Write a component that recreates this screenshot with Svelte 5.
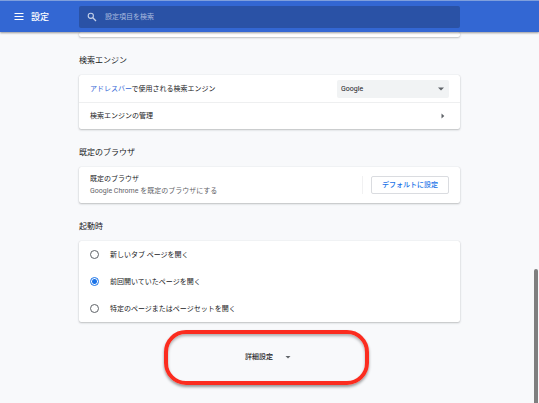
<script lang="ts">
	const startupOptions = [
		{ value: 'newtab', label: '新しいタブ ページを開く' },
		{ value: 'continue', label: '前回開いていたページを開く' },
		{ value: 'specific', label: '特定のページまたはページセットを開く' }
	];

	let startup = $state('continue');
	let engine = $state('Google');
	let query = $state('');
</script>

<header>
	<div class="brand">
		<button type="button" class="menu" aria-label="メニュー">
			<svg width="10" height="7" viewBox="0 0 10 7">
				<path d="M0.5 0.5h9M0.5 3.5h9M0.5 6.5h9" stroke="currentColor" stroke-width="1" />
			</svg>
		</button>
		<h1>設定</h1>
	</div>
	<label class="search">
		<svg width="10" height="10" viewBox="0 0 10 10" fill="none" stroke="currentColor">
			<circle cx="3.8" cy="3.8" r="2.6" stroke-width="1.1" />
			<path d="M5.8 5.8L9 9" stroke-width="1.3" />
		</svg>
		<input type="text" placeholder="設定項目を検索" aria-label="設定項目を検索" bind:value={query} />
	</label>
</header>

<main>
	<!-- スクロールで隠れているカードの下端 -->
	<div class="card tail"></div>

	<section>
		<h2>検索エンジン</h2>
		<div class="card">
			<div class="row">
				<label for="engine"><a href="#omnibox">アドレスバー</a>で使用される検索エンジン</label>
				<div class="select">
					<select id="engine" bind:value={engine}>
						<option>Google</option>
					</select>
					<svg width="6" height="4" viewBox="0 0 6 4"><path d="M0 0.5h6L3 3.5z" fill="#5f6368" /></svg>
				</div>
			</div>
			<a class="row divided" href="#engines">
				<span>検索エンジンの管理</span>
				<svg class="next" width="4" height="6" viewBox="0 0 4 6"><path d="M0.5 0.5v5L3.3 3z" fill="#5f6368" /></svg>
			</a>
		</div>
	</section>

	<section>
		<h2>既定のブラウザ</h2>
		<div class="card">
			<div class="row tall">
				<div>
					<div>既定のブラウザ</div>
					<div class="secondary">Google Chrome を既定のブラウザにする</div>
				</div>
				<div class="action">
					<button type="button" class="outlined">デフォルトに設定</button>
				</div>
			</div>
		</div>
	</section>

	<section>
		<h2>起動時</h2>
		<div class="card">
			{#each startupOptions as option (option.value)}
				<label class="row radio">
					<input type="radio" name="startup" value={option.value} bind:group={startup} />
					<span>{option.label}</span>
				</label>
			{/each}
		</div>
	</section>

	<div class="more">
		<button type="button" class="advanced">
			<span>詳細設定</span>
			<svg width="12" height="12" viewBox="0 0 12 12"><path d="M3.5 5h5L6 7.5z" fill="#5f6368" /></svg>
		</button>
	</div>
</main>

<div class="scrollbar"></div>

<style>
	:global(body) {
		background: #f8f9fb;
	}
	header,
	main {
		font-family: Roboto, 'Noto Sans CJK JP', sans-serif;
		font-size: 7px;
		line-height: 12px;
		color: #202124;
	}
	h1,
	h2 {
		margin: 0;
		font-weight: 500;
	}
	button,
	input,
	select {
		margin: 0;
		padding: 0;
		border: none;
		background: none;
		font: inherit;
		color: inherit;
	}
	a {
		color: #3367d6;
		text-decoration: none;
	}
	svg {
		display: block;
		flex: none;
	}
	header {
		position: relative;
		z-index: 1;
		display: grid;
		grid-template-columns: 1fr minmax(0, 381px) 1fr;
		align-items: center;
		box-sizing: border-box;
		height: 32px;
		border-top: 1px solid #7f9fdc;
		background: #3367d3;
		color: #fff;
		box-shadow: 0 1px 2px rgba(0, 0, 0, 0.4);
	}
	.brand {
		display: flex;
		align-items: center;
		gap: 7px;
		padding-left: 14px;
	}
	h1 {
		font-size: 9px;
		line-height: 14px;
	}
	.search {
		display: flex;
		align-items: center;
		gap: 8px;
		height: 22px;
		padding: 0 8px;
		border-radius: 2px;
		background: #2a52a6;
		color: #c4d0e9;
	}
	.search input {
		flex: 1;
		height: 14px;
		outline: none;
	}
	.search input::placeholder {
		color: #a9b9de;
		opacity: 1;
	}
	main {
		max-width: 381px;
		margin: 0 auto;
	}
	h2 {
		padding: 18px 0 8px;
		font-size: 8px;
		font-weight: 400;
	}
	.card {
		border-radius: 2px;
		background: #fff;
		box-shadow:
			0 1px 2px rgba(60, 64, 67, 0.3),
			0 0 1px rgba(60, 64, 67, 0.2);
	}
	.tail {
		height: 5px;
	}
	.row {
		display: flex;
		align-items: center;
		justify-content: space-between;
		box-sizing: border-box;
		height: 27px;
		padding: 0 11px;
		color: inherit;
	}
	.divided {
		border-top: 1px solid #eeeff0;
	}
	.next {
		margin-right: 4px;
	}
	.tall {
		height: 36px;
	}
	.secondary {
		color: #5f6368;
	}
	.select {
		display: grid;
		align-items: center;
		width: 112px;
	}
	.select > * {
		grid-area: 1 / 1;
	}
	.select svg {
		justify-self: end;
		margin-right: 5px;
		pointer-events: none;
	}
	select {
		appearance: none;
		width: 100%;
		height: 18px;
		padding: 0 4px;
		border-radius: 2px;
		background: #f1f3f4;
	}
	.action {
		padding-left: 8px;
		border-left: 1px solid #f1f1f2;
	}
	.outlined {
		display: block;
		box-sizing: border-box;
		height: 18px;
		padding: 0 10px;
		border: 1px solid #dadce0;
		border-radius: 2px;
		color: #1a73e8;
		font-weight: 500;
	}
	.radio {
		justify-content: flex-start;
		gap: 11px;
	}
	.radio input {
		appearance: none;
		box-sizing: border-box;
		width: 9px;
		height: 9px;
		border: 1px solid #5f6368;
		border-radius: 50%;
	}
	.radio input:checked {
		border-color: #1a73e8;
		background: radial-gradient(circle, #1a73e8 2px, #fff 3px);
	}
	.more {
		display: flex;
		justify-content: center;
		padding: 25px 0 36px;
	}
	.advanced {
		position: relative;
		display: flex;
		align-items: center;
		gap: 9px;
		height: 20px;
		font-weight: 500;
	}
	/* 注目させるための赤い枠 */
	.advanced::after {
		content: '';
		position: absolute;
		inset: -17px -75px -18px -81px;
		box-sizing: border-box;
		border: 4px solid #fb2c1f;
		border-radius: 22px;
		box-shadow:
			0 2px 3px rgba(0, 0, 0, 0.4),
			inset 0 2px 3px rgba(0, 0, 0, 0.3);
		pointer-events: none;
	}
	.scrollbar {
		position: fixed;
		right: 1px;
		bottom: 0;
		width: 4px;
		height: 33.3%;
		border-radius: 2px 2px 0 0;
		background: #7f7f7f;
	}
</style>
